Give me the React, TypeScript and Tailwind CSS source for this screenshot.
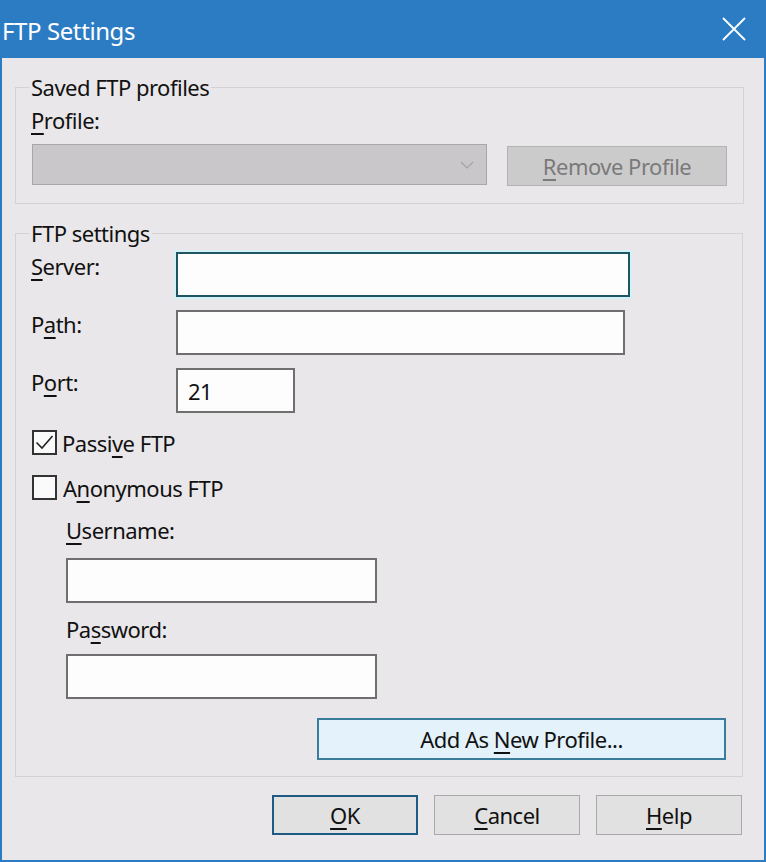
import React from "react";

const U = ({ children }: { children: React.ReactNode }) => (
  <u className="underline underline-offset-[4px] decoration-[1.5px]">{children}</u>
);

export default function App() {
  return (
    <div className="w-[766px] h-[862px] bg-[#2c7cc4] flex flex-col font-['Noto_Sans',sans-serif] text-[22px] tracking-[-0.5px] text-[#111]">
      <div className="h-[58px] flex items-center pl-[2px] pr-[20px] shrink-0">
        <span className="text-white text-[24px] tracking-[-0.4px] leading-[32px] mt-[3px]">FTP Settings</span>
        <svg className="ml-auto" width="24" height="24" viewBox="0 0 24 24">
          <path d="M1 1 L23 23 M23 1 L1 23" stroke="#ffffff" strokeWidth="1.8" fill="none" />
        </svg>
      </div>
      <div className="flex-1 mx-[2px] mb-[2px] bg-[#e9e7e9] pl-[13px] pt-[15px]">
        <div className="w-[728px]">
          <fieldset className="border border-[#d3d3d3] pl-[15px] pr-[16px] pb-[17px]">
            <legend className="leading-[28px] px-[2px] -ml-[2px]">Saved FTP profiles</legend>
            <div className="mt-[5px] leading-[28px]">
              <U>P</U>rofile:
            </div>
            <div className="mt-[10px] flex items-start">
              <div className="ml-[1px] w-[455px] h-[41px] bg-[#c9c7c9] border border-[#a8a6a8] flex items-center justify-end pr-[12px]">
                <svg width="14" height="8" viewBox="0 0 14 8">
                  <path d="M1 1 L7 7 L13 1" stroke="#a3a3a3" strokeWidth="1.2" fill="none" />
                </svg>
              </div>
              <div className="ml-[20px] mt-[2px] w-[220px] h-[40px] bg-[#cccbcc] border border-[#b3b3b3] flex items-center justify-center text-[#7a7a7a] leading-[28px]">
                <span>
                  <U>R</U>emove Profile
                </span>
              </div>
            </div>
          </fieldset>

          <fieldset className="mt-[15px] border border-[#d3d3d3] pl-[15px] pr-[16px] pb-[16px]">
            <legend className="leading-[28px] px-[2px] -ml-[2px]">FTP settings</legend>
            <div className="mt-[5px] flex items-start">
              <div className="w-[145px] leading-[28px]">
                <U>S</U>erver:
              </div>
              <div className="w-[454px] h-[45px] bg-[#fdfdfd] border-2 border-[#1f5560] shadow-[0_0_0_2px_#d2f1f7]" />
            </div>
            <div className="mt-[13px] flex items-start">
              <div className="w-[145px] leading-[28px]">
                P<U>a</U>th:
              </div>
              <div className="w-[449px] h-[45px] bg-[#fdfdfd] border-2 border-[#6f6f6f]" />
            </div>
            <div className="mt-[13px] flex items-start">
              <div className="w-[145px] leading-[28px]">
                P<U>o</U>rt:
              </div>
              <div className="w-[119px] h-[45px] bg-[#fdfdfd] border-2 border-[#6f6f6f] flex items-center pl-[10px] leading-[28px]">
                21
              </div>
            </div>

            <div className="mt-[17px] flex items-center h-[25px]">
              <div className="ml-[1px] w-[25px] h-[25px] border-2 border-[#333] bg-[#fafafa] flex items-center justify-center">
                <svg width="21" height="21" viewBox="0 0 21 21">
                  <path d="M2.5 10.5 L8 16 L18.5 4" stroke="#222" strokeWidth="1.6" fill="none" />
                </svg>
              </div>
              <span className="ml-[5px] leading-[28px]">
                Passi<U>v</U>e FTP
              </span>
            </div>
            <div className="mt-[20px] flex items-center h-[25px]">
              <div className="ml-[1px] w-[25px] h-[25px] border-2 border-[#333] bg-[#fafafa]" />
              <span className="ml-[6px] leading-[28px]">
                A<U>n</U>onymous FTP
              </span>
            </div>

            <div className="mt-[16px] ml-[35px] leading-[28px]">
              <U>U</U>sername:
            </div>
            <div className="mt-[14px] ml-[35px] w-[311px] h-[45px] bg-[#fdfdfd] border-2 border-[#6f6f6f]" />
            <div className="mt-[12px] ml-[35px] leading-[28px]">
              Pa<U>s</U>sword:
            </div>
            <div className="mt-[11px] ml-[35px] w-[311px] h-[45px] bg-[#fdfdfd] border-2 border-[#6f6f6f]" />

            <div className="mt-[19px] flex justify-end">
              <div className="w-[409px] h-[42px] bg-[#e3f2fb] border-2 border-[#3a7c9c] flex items-center justify-center leading-[28px]">
                <span>
                  Add As <U>N</U>ew Profile...
                </span>
              </div>
            </div>
          </fieldset>

          <div className="mt-[18px] mr-[1px] flex justify-end gap-[16px]">
            <div className="w-[146px] h-[40px] bg-[#e1e1e1] border-2 border-[#1f5a85] flex items-center justify-center leading-[28px]">
              <span>
                <U>O</U>K
              </span>
            </div>
            <div className="w-[146px] h-[40px] bg-[#e1e1e1] border border-[#a9a9a9] flex items-center justify-center leading-[28px]">
              <span>
                <U>C</U>ancel
              </span>
            </div>
            <div className="w-[146px] h-[40px] bg-[#e1e1e1] border border-[#a9a9a9] flex items-center justify-center leading-[28px]">
              <span>
                <U>H</U>elp
              </span>
            </div>
          </div>
        </div>
      </div>
    </div>
  );
}
